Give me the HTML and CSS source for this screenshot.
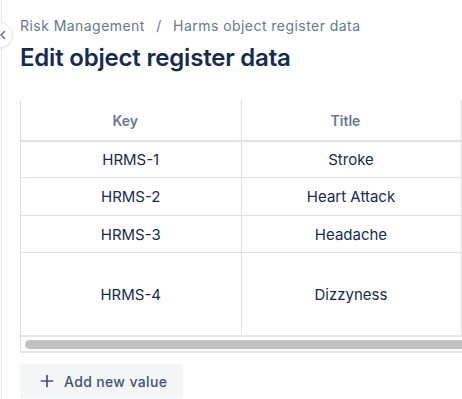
FILE: index.html
```html
<!DOCTYPE html>
<html lang="en">
<head>
    <meta charset="UTF-8">
    <meta name="viewport" content="width=device-width, initial-scale=1.0">
    <title>Edit object register data</title>
    <link rel="stylesheet" href="styles.css">
</head>
<body>
    <div class="pagina">
        <div class="barra-lateral">
            <button class="recolher" aria-label="Collapse sidebar">
                <svg width="10" height="10" viewBox="0 0 10 10">
                    <path d="M6.5 1.5 L3 5 L6.5 8.5" fill="none" stroke="#6b778c" stroke-width="1.6" stroke-linecap="round" stroke-linejoin="round"/>
                </svg>
            </button>
        </div>

        <div class="conteudo">
            <nav class="migalhas">
                <span>Risk Management</span>
                <span class="separador">/</span>
                <span>Harms object register data</span>
            </nav>
            <h1>Edit object register data</h1>

            <div class="tabela-caixa">
                <table class="tabela">
                    <colgroup>
                        <col class="coluna">
                        <col class="coluna">
                        <col class="coluna">
                    </colgroup>
                    <thead>
                        <tr>
                            <th>Key</th>
                            <th>Title</th>
                            <th></th>
                        </tr>
                    </thead>
                    <tbody>
                        <tr class="linha primeira">
                            <td>HRMS-1</td>
                            <td>Stroke</td>
                            <td></td>
                        </tr>
                        <tr class="linha segunda">
                            <td>HRMS-2</td>
                            <td>Heart Attack</td>
                            <td></td>
                        </tr>
                        <tr class="linha">
                            <td>HRMS-3</td>
                            <td>Headache</td>
                            <td></td>
                        </tr>
                        <tr class="linha alta">
                            <td>HRMS-4</td>
                            <td>Dizzyness</td>
                            <td></td>
                        </tr>
                    </tbody>
                </table>
                <div class="rolagem">
                    <div class="rolagem-polegar"></div>
                </div>
            </div>

            <button class="adicionar">
                <svg width="14" height="14" viewBox="0 0 14 14">
                    <path d="M7 1.5 V12.5 M1.5 7 H12.5" stroke="#42526e" stroke-width="1.7" stroke-linecap="round"/>
                </svg>
                <span>Add new value</span>
            </button>
        </div>
    </div>
</body>
</html>
```

FILE: styles.css
```css
body {
    font-family: Inter, "Noto Sans", sans-serif;
    background-color: #fff;
    margin: 0;
    padding: 0;
    overflow: hidden;
    height: 399px;
}

.pagina {
    display: flex;
    height: 399px;
}

.barra-lateral {
    position: relative;
    width: 1px;
    flex-shrink: 0;
    border-right: 1px solid #e4e6ea;
}

.recolher {
    position: absolute;
    left: -13px;
    top: 22px;
    width: 26px;
    height: 26px;
    padding: 0;
    border: 1px solid #e9eaee;
    border-radius: 50%;
    background-color: #fff;
    box-shadow: 0 1px 2px rgba(9, 30, 66, 0.08);
    display: flex;
    align-items: center;
    justify-content: center;
}

.recolher svg {
    margin-left: 6px;
}

.conteudo {
    padding-left: 18px;
    flex-shrink: 0;
    width: 700px;
}

.migalhas {
    margin-top: 16px;
    font-size: 14px;
    line-height: 20px;
    letter-spacing: 0.45px;
    color: #6b778c;
}

.separador {
    margin: 0 7px;
}

h1 {
    margin: 8px 0 0 0;
    font-size: 24px;
    line-height: 28px;
    font-weight: 600;
    color: #172b4d;
    letter-spacing: -0.2px;
}

.tabela-caixa {
    margin-top: 28px;
    width: 660px;
    border-left: 1px solid #dfe1e6;
    border-bottom: 2px solid #e4e6ea;
}

.tabela {
    border-collapse: collapse;
    table-layout: fixed;
    width: 660px;
}

.coluna {
    width: 220px;
}

.tabela th {
    height: 40px;
    font-size: 14px;
    font-weight: 600;
    color: #6b778c;
    border-right: 1px solid #dfe1e6;
    border-bottom: 2px solid #dfe1e6;
    box-shadow: 0 1px 2px rgba(9, 30, 66, 0.06);
    text-align: center;
    padding: 0 11px 0 0;
}

.tabela td {
    height: 36px;
    font-size: 15px;
    color: #172b4d;
    border-right: 1px solid #dfe1e6;
    border-bottom: 1px solid #dfe1e6;
    text-align: center;
    padding: 0;
}

.linha.primeira td {
    height: 35px;
}

.linha.segunda td {
    height: 37px;
}

.linha.alta td {
    height: 82px;
    border-bottom: 2px solid #e4e6ea;
}

.rolagem {
    height: 14px;
    display: flex;
    align-items: center;
    padding-left: 4px;
}

.rolagem-polegar {
    height: 9px;
    width: 100%;
    border-radius: 5px;
    background-color: #c1c1c1;
}

.adicionar {
    margin-top: 11px;
    display: flex;
    align-items: center;
    gap: 10px;
    height: 34px;
    padding: 0 16px 0 20px;
    border: none;
    border-radius: 3px;
    background-color: #f4f5f7;
    font-family: Inter, "Noto Sans", sans-serif;
    font-size: 14px;
    font-weight: 500;
    letter-spacing: 0.35px;
    color: #42526e;
}
```
